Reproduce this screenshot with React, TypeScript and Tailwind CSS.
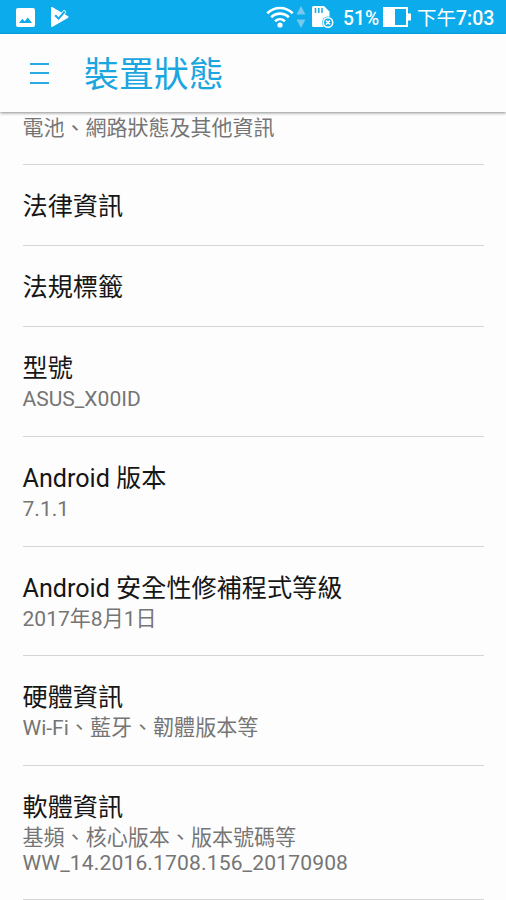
const items = [
  { title: "法律資訊", lines: [], height: "h-[81px]" },
  { title: "法規標籤", lines: [], height: "h-[81px]" },
  { title: "型號", lines: ["ASUS_X00ID"], height: "h-[110px]" },
  { title: "Android 版本", lines: ["7.1.1"], height: "h-[109.5px]" },
  { title: "Android 安全性修補程式等級", lines: ["2017年8月1日"], height: "h-[109.5px]" },
  { title: "硬體資訊", lines: ["Wi-Fi、藍牙、韌體版本等"], height: "h-[110px]" },
  {
    title: "軟體資訊",
    lines: ["基頻、核心版本、版本號碼等", "WW_14.2016.1708.156_20170908"],
    height: "h-[133.5px]",
  },
]

function StatusBar() {
  return (
    <div className="flex h-[34px] items-center bg-[#0cabeb] text-white">
      <svg className="ml-4 h-[19px] w-[19px] shrink-0" viewBox="0 0 19 19">
        <path
          fillRule="evenodd"
          fill="currentColor"
          d="M2 0h15a2 2 0 0 1 2 2v15a2 2 0 0 1-2 2H2a2 2 0 0 1-2-2V2a2 2 0 0 1 2-2Zm1 15h13l-4.2-5.6-3.2 4-2.2-2.7L3 15Z"
        />
      </svg>
      <svg className="ml-4 h-[20px] w-[18px] shrink-0" viewBox="0 0 18 20">
        <path
          fill="currentColor"
          d="M0 1.2C0 .2.8-.2 1.6.3L10.5 5.4 13 2.8 15.2 4.6 14 7.4 16.8 9c1 .6 1 1.4 0 2L1.6 19.7C.8 20.2 0 19.8 0 18.8Z"
        />
        <path d="M4.2 8.2 7.6 11.6 13.8 4.4" fill="none" stroke="#0cabeb" strokeWidth="2" />
      </svg>

      <svg className="ml-auto h-[24px] w-[28px] shrink-0" viewBox="0 0 28 24">
        <g fill="none" stroke="currentColor" strokeWidth="2.6">
          <path d="M1.3 8.3C8.5 1.2 19.5 1.2 26.7 8.3" />
          <path d="M5.2 12.3C10.2 7.4 17.8 7.4 22.8 12.3" />
          <path d="M9.1 16.3C12 13.5 16 13.5 18.9 16.3" />
        </g>
        <circle cx="14" cy="20" r="2.6" fill="currentColor" />
      </svg>
      <svg className="ml-[2px] h-[22px] w-[10px] shrink-0" viewBox="0 0 10 22">
        <path d="M5 0l4.5 8.5h-9ZM5 22l4.5-8.5h-9Z" fill="#75c8ef" />
      </svg>
      <svg className="ml-[6px] h-[22px] w-[22px] shrink-0" viewBox="0 0 22 22">
        <path
          fill="currentColor"
          d="M1.5 0H12l5.5 5.5V21H1.5A1.5 1.5 0 0 1 0 19.5v-18A1.5 1.5 0 0 1 1.5 0Z"
        />
        <path d="M3.5 2v5M6.8 2v5M10 2v5" stroke="#0cabeb" strokeWidth="1.5" />
        <circle cx="16" cy="16.5" r="6" fill="#0cabeb" />
        <circle cx="16" cy="16.5" r="4.7" fill="none" stroke="currentColor" strokeWidth="1.6" />
        <path d="m14 14.5 4 4m0-4-4 4" stroke="currentColor" strokeWidth="1.6" />
      </svg>
      <span className="ml-[9px] w-[37px] whitespace-nowrap pt-[3px] text-[19.3px] font-medium leading-6">
        51%
      </span>
      <svg className="ml-[3px] h-[20px] w-[28px] shrink-0" viewBox="0 0 28 20">
        <path d="M1 1h23v18H1Z" fill="none" stroke="currentColor" strokeWidth="2" />
        <path d="M1 1h11v18H1ZM24 6.5h4v7h-4Z" fill="currentColor" />
      </svg>
      <span className="ml-[6px] mr-[11px] w-[78px] whitespace-nowrap pt-[3px] text-[19.5px] leading-6">
        下午<span className="font-medium">7:03</span>
      </span>
    </div>
  )
}

function Header() {
  return (
    <header className="relative z-10 flex h-[78px] items-center bg-[#fdfdfd] shadow-[0_1px_3px_rgba(0,0,0,0.45)]">
      <button className="ml-[30px] flex h-[21px] w-[19px] flex-col justify-between">
        <span className="h-[2px] w-full bg-[#29abe2]" />
        <span className="h-[2px] w-full bg-[#29abe2]" />
        <span className="h-[2px] w-full bg-[#29abe2]" />
      </button>
      <h1 className="ml-[35px] pt-[5px] text-[34.9px] leading-[48px] text-[#1ba6df]">裝置狀態</h1>
    </header>
  )
}

export default function App() {
  return (
    <div className="h-[900px] w-[506px] overflow-hidden bg-[#fdfdfd] font-['Roboto','Noto_Sans_CJK_TC',sans-serif]">
      <StatusBar />
      <Header />
      <main className="pl-[22.5px] pr-[22px]">
        <div className="h-[53px] border-b border-[#d6d6d6] pt-[4px] text-[21px] leading-[25px] text-[#757575]">
          電池、網路狀態及其他資訊
        </div>
        {items.map((item) => (
          <div
            key={item.title}
            className={`${item.height} whitespace-nowrap border-b border-[#d6d6d6] pt-[26px]`}
          >
            <h2 className="text-[25.15px] leading-[32px] text-[#161616]">{item.title}</h2>
            <div className="pt-[1.4px] text-[21.05px] leading-[25px] text-[#757575]">
              {item.lines.map((line) => (
                <p key={line} className={line.startsWith("WW") ? "tracking-[0.15px]" : ""}>
                  {line}
                </p>
              ))}
            </div>
          </div>
        ))}
      </main>
    </div>
  )
}
